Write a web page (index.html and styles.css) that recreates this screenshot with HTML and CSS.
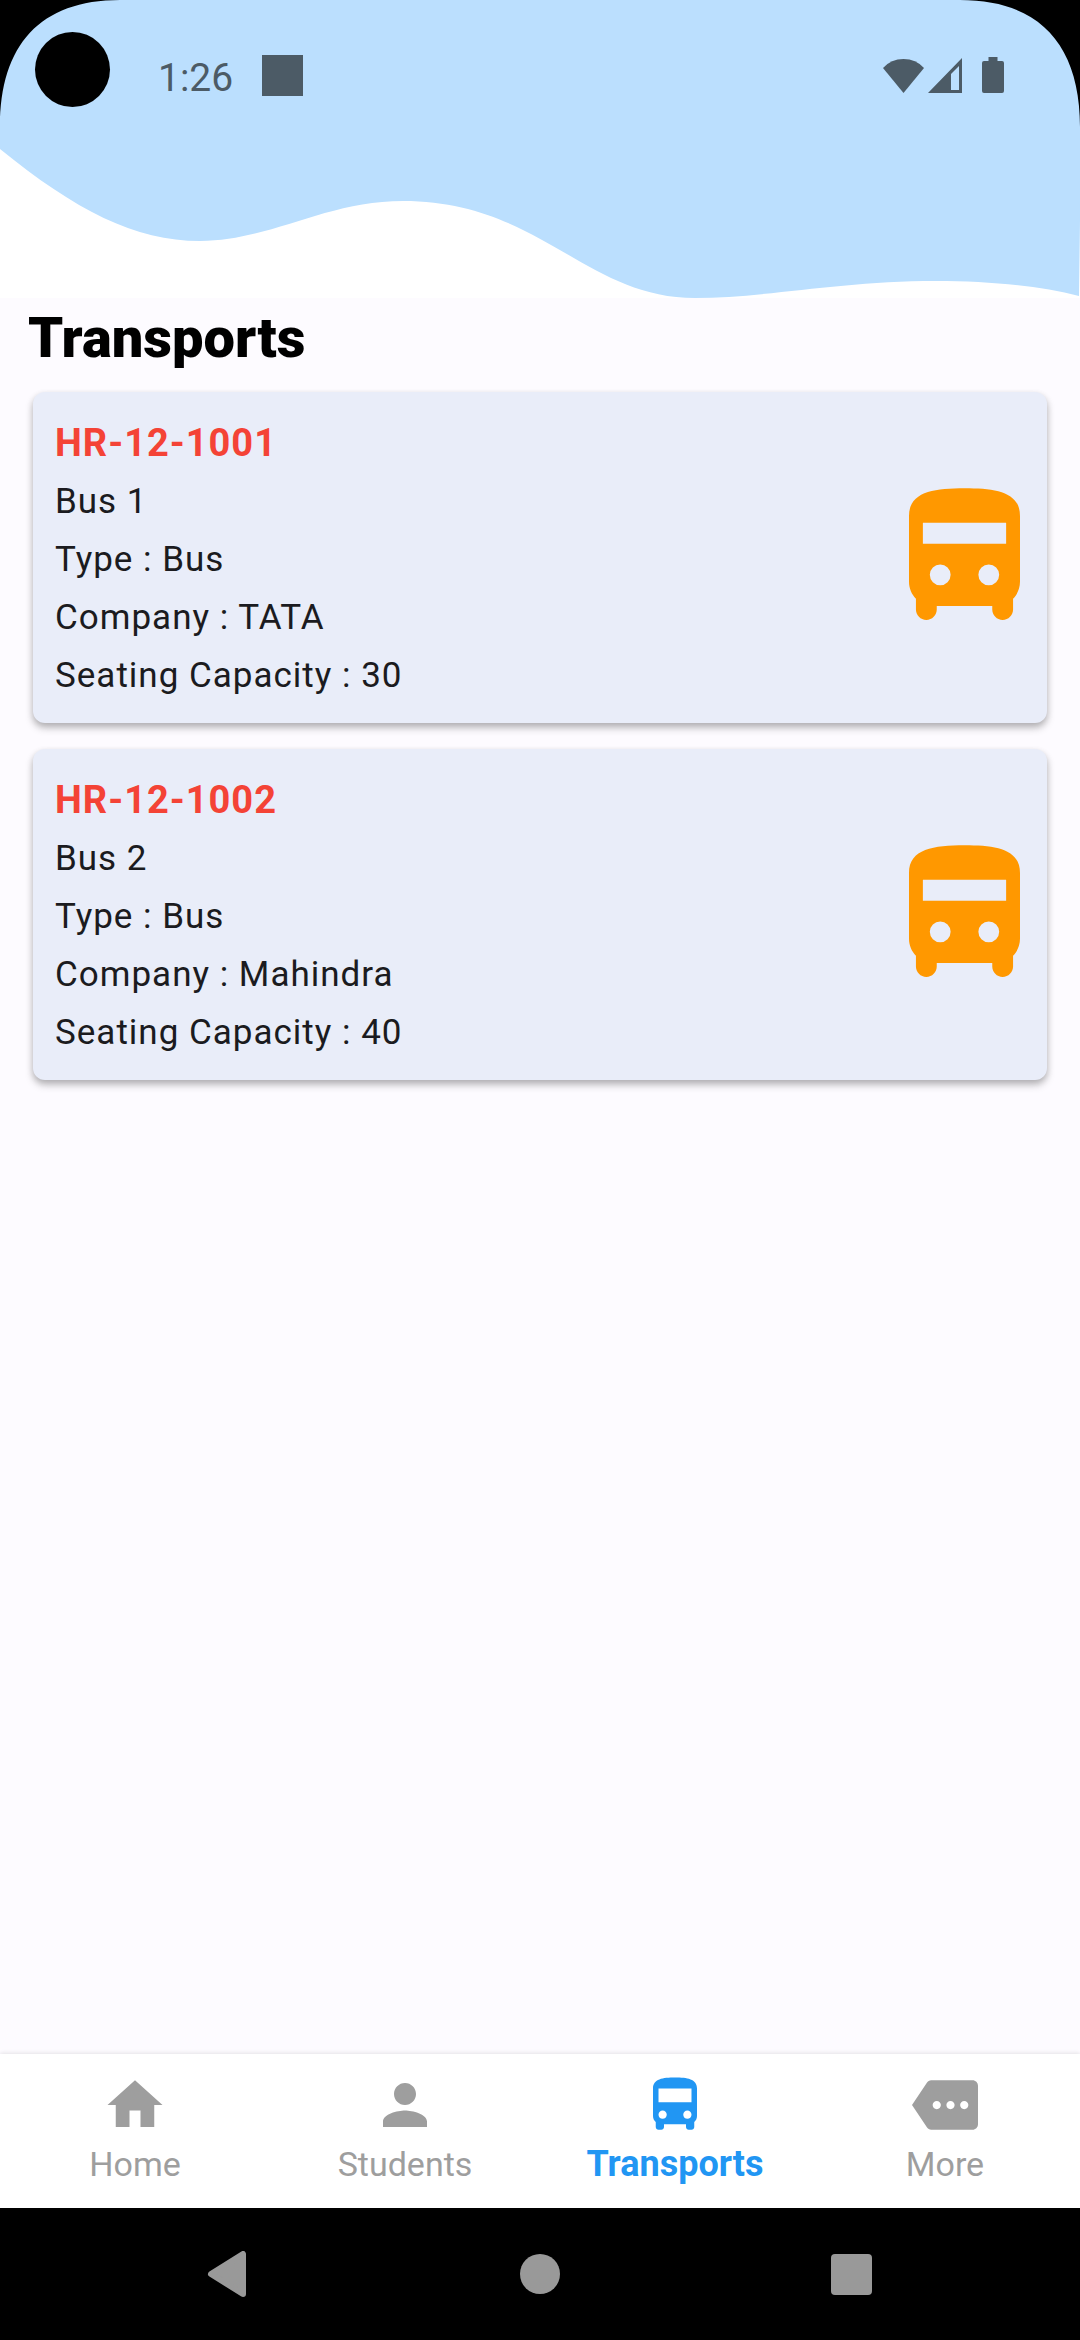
FILE: index.html
```
<!DOCTYPE html>
<html lang="en">
<head>
    <meta charset="UTF-8">
    <meta name="viewport" content="width=device-width, initial-scale=1.0">
    <title>Transports</title>
    <link rel="stylesheet" href="styles.css">
</head>
<body>

    <header class="header">
        <svg class="wave" viewBox="0 0 1080 298" preserveAspectRatio="none" aria-hidden="true">
            <path d="M0 0H1080V220L1079 296C1040 286 990 281 936 281C840 281 765 298 695 298C585 298 540 201 403 201C325 201 270 241 200 241C135 241 75 210 0 149Z"/>
        </svg>

        <!-- Rounded screen corners and camera hole -->
        <svg class="corner corner-left" viewBox="0 0 120 127" aria-hidden="true"><path d="M0 0H120C40 0 0 45 0 127Z"/></svg>
        <svg class="corner corner-right" viewBox="0 0 120 127" aria-hidden="true"><path d="M0 0H120C40 0 0 45 0 127Z"/></svg>
        <div class="camera"></div>

        <div class="status-bar">
            <span class="time">1:26</span>
            <span class="notification"></span>
            <div class="status-icons">
                <svg width="41" height="36" viewBox="0 0 41 36"><path d="M0 11Q8 2 20.500 2T41 11L20.500 36Z"/></svg>
                <svg width="34" height="36" viewBox="0 0 34 36"><path fill-rule="evenodd" d="M34 1V36H0ZM31 9L23 17V33H31Z"/></svg>
                <svg class="battery" width="22" height="36" viewBox="0 0 22 36"><path d="M6.500 0h9v4H20a2 2 0 0 1 2 2v28a2 2 0 0 1-2 2H2a2 2 0 0 1-2-2V6a2 2 0 0 1 2-2h4.500z"/></svg>
            </div>
        </div>
    </header>

    <main class="content">
        <h1>Transports</h1>

        <div class="card">
            <div class="details">
                <h2>HR-12-1001</h2>
                <p>Bus 1</p>
                <p>Type : Bus</p>
                <p>Company : TATA</p>
                <p>Seating Capacity : 30</p>
            </div>
            <svg class="bus" viewBox="4 2 16 20" aria-hidden="true">
                <path fill-rule="evenodd" d="M12 2C7.580 2 4 2.500 4 6v9.500c0 .950.380 1.810 1 2.440V19.500c0 .830.670 1.500 1.500 1.500S8 20.330 8 19.500V19h8v.5c0 .830.670 1.500 1.500 1.500s1.500-.670 1.500-1.500v-1.560c.620-.630 1-1.490 1-2.440V6c0-3.500-3.580-4-8-4zM8.500 16a1.500 1.500 0 1 1 0-3 1.500 1.500 0 0 1 0 3zm7 0a1.500 1.500 0 1 1 0-3 1.500 1.500 0 0 1 0 3zM18 10H6V7h12z"/>
            </svg>
        </div>

        <div class="card">
            <div class="details">
                <h2>HR-12-1002</h2>
                <p>Bus 2</p>
                <p>Type : Bus</p>
                <p>Company : Mahindra</p>
                <p>Seating Capacity : 40</p>
            </div>
            <svg class="bus" viewBox="4 2 16 20" aria-hidden="true">
                <path fill-rule="evenodd" d="M12 2C7.580 2 4 2.500 4 6v9.500c0 .950.380 1.810 1 2.440V19.500c0 .830.670 1.500 1.500 1.500S8 20.330 8 19.500V19h8v.5c0 .830.670 1.500 1.500 1.500s1.500-.670 1.500-1.500v-1.560c.620-.630 1-1.490 1-2.440V6c0-3.500-3.580-4-8-4zM8.500 16a1.500 1.500 0 1 1 0-3 1.500 1.500 0 0 1 0 3zm7 0a1.500 1.500 0 1 1 0-3 1.500 1.500 0 0 1 0 3zM18 10H6V7h12z"/>
            </svg>
        </div>
    </main>

    <nav class="tabs">
        <a href="#home">
            <svg viewBox="0 0 24 24" aria-hidden="true"><path d="M10 20v-6h4v6h5v-8h3L12 3 2 12h3v8z"/></svg>
            <span>Home</span>
        </a>
        <a href="#students">
            <svg viewBox="0 0 24 24" aria-hidden="true"><path d="M12 12c2.210 0 4-1.790 4-4s-1.790-4-4-4-4 1.790-4 4 1.790 4 4 4zm0 2c-2.670 0-8 1.340-8 4v2h16v-2c0-2.660-5.330-4-8-4z"/></svg>
            <span>Students</span>
        </a>
        <a href="#transports" class="active" aria-current="page">
            <svg viewBox="0 0 24 24" aria-hidden="true"><path d="M4 16c0 .88.39 1.67 1 2.22V20c0 .55.45 1 1 1h1c.55 0 1-.45 1-1v-1h8v1c0 .55.45 1 1 1h1c.55 0 1-.45 1-1v-1.780c.61-.55 1-1.340 1-2.220V6c0-3.500-3.580-4-8-4s-8 .5-8 4v10zm3.500 1c-.83 0-1.500-.67-1.500-1.500S6.670 14 7.500 14s1.500.67 1.500 1.500S8.330 17 7.500 17zm9 0c-.83 0-1.500-.67-1.500-1.500s.67-1.500 1.500-1.500 1.500.67 1.500 1.500-.67 1.500-1.500 1.500zm1.500-6H6V6h12v5z"/></svg>
            <span>Transports</span>
        </a>
        <a href="#more">
            <svg viewBox="0 0 24 24" aria-hidden="true"><path d="M22 3H7c-.69 0-1.230.35-1.590.88L0 12l5.410 8.110c.36.53.9.89 1.590.89h15c1.100 0 2-.9 2-2V5c0-1.100-.9-2-2-2zM9 13.500c-.83 0-1.500-.67-1.500-1.500s.67-1.500 1.500-1.500 1.500.67 1.500 1.500-.67 1.500-1.500 1.500zm5 0c-.83 0-1.500-.67-1.500-1.500s.67-1.500 1.500-1.500 1.500.67 1.500 1.500-.67 1.500-1.500 1.500zm5 0c-.83 0-1.500-.67-1.500-1.500s.67-1.500 1.500-1.500 1.500.67 1.500 1.500-.67 1.500-1.500 1.500z"/></svg>
            <span>More</span>
        </a>
    </nav>

    <div class="system-bar">
        <button type="button" aria-label="Back">
            <svg viewBox="0 0 46 46"><path d="M38 3V43L6 23Z" stroke-width="6" stroke-linejoin="round"/></svg>
        </button>
        <button type="button" aria-label="Home">
            <svg viewBox="0 0 46 46"><circle cx="23" cy="23" r="20"/></svg>
        </button>
        <button type="button" aria-label="Recent apps">
            <svg viewBox="0 0 46 46"><rect x="2" y="3" width="41" height="41" rx="4"/></svg>
        </button>
    </div>

</body>
</html>
```
FILE: styles.css
```
* {
    margin: 0;
    padding: 0;
    box-sizing: border-box;
}

body {
    font-family: Roboto, sans-serif;
    color: #1b1b20;
    background-color: #fdfbff;
    min-height: 100vh;
    display: flex;
    flex-direction: column;
}

svg {
    display: block;
}

/* Header */
.header {
    position: relative;
    height: 298px;
    background-color: #fff;
}

.wave {
    position: absolute;
    top: 0;
    left: 0;
    width: 100%;
    height: 100%;
    fill: #bbdffe;
}

.corner {
    position: absolute;
    top: 0;
    width: 120px;
    height: 127px;
}

.corner-left {
    left: 0;
}

.corner-right {
    right: 0;
    transform: scaleX(-1);
}

.camera {
    position: absolute;
    top: 32px;
    left: 35px;
    width: 75px;
    height: 75px;
    border-radius: 50%;
    background-color: #000;
}

.status-bar {
    position: relative;
    display: flex;
    align-items: center;
    height: 150px;
    padding: 0 76px 0 158px;
    color: #4c5b66;
}

.time {
    padding-top: 5px;
    font-size: 39px;
    line-height: 44px;
}

.notification {
    width: 41px;
    height: 41px;
    margin-left: 29px;
    background-color: #4c5b66;
}

.status-icons {
    display: flex;
    gap: 4px;
    margin-left: auto;
    fill: #4c5b66;
}

.battery {
    margin-left: 16px;
}

/* Transport list */
.content {
    flex: 1;
    padding-bottom: 26px;
}

h1 {
    font-size: 56px;
    line-height: 80px;
    font-weight: 900;
    color: #000;
    padding: 0 28px;
    margin-bottom: 14px;
}

.card {
    display: flex;
    align-items: center;
    justify-content: space-between;
    margin: 0 33px 26px;
    padding: 21px 27px 18px 22px;
    border-radius: 12px;
    background-color: #e9edf9;
    box-shadow: 0 5px 8px rgba(0, 0, 0, 0.2), 0 3px 6px rgba(0, 0, 0, 0.15);
}

.details {
    font-size: 35px;
    line-height: 58px;
    letter-spacing: 1px;
}

h2 {
    font-size: 38px;
    line-height: 60px;
    font-weight: 700;
    color: #f44336;
}

.bus {
    width: 111px;
    height: 139px;
    margin-bottom: 4px;
    fill: #ff9800;
}

/* Bottom navigation */
.tabs {
    display: grid;
    grid-template-columns: repeat(4, 1fr);
    padding: 18px 0 22px;
    background-color: #fff;
    box-shadow: 0 -1px 4px rgba(0, 0, 0, 0.1);
}

.tabs a {
    display: flex;
    flex-direction: column;
    align-items: center;
    gap: 4px;
    font-size: 34px;
    line-height: 44px;
    color: #9e9e9e;
    text-decoration: none;
}

.tabs svg {
    width: 66px;
    height: 66px;
    fill: currentColor;
}

.tabs .active {
    font-size: 36px;
    font-weight: 700;
    color: #2196f3;
}

/* Android system buttons */
.system-bar {
    display: grid;
    grid-template-columns: repeat(3, 1fr);
    justify-items: center;
    align-items: center;
    height: 132px;
    padding: 0 72px;
    background-color: #000;
}

.system-bar button {
    border: none;
    background: none;
}

.system-bar svg {
    width: 46px;
    height: 46px;
    fill: #999;
    stroke: #999;
    stroke-width: 0;
}
```
